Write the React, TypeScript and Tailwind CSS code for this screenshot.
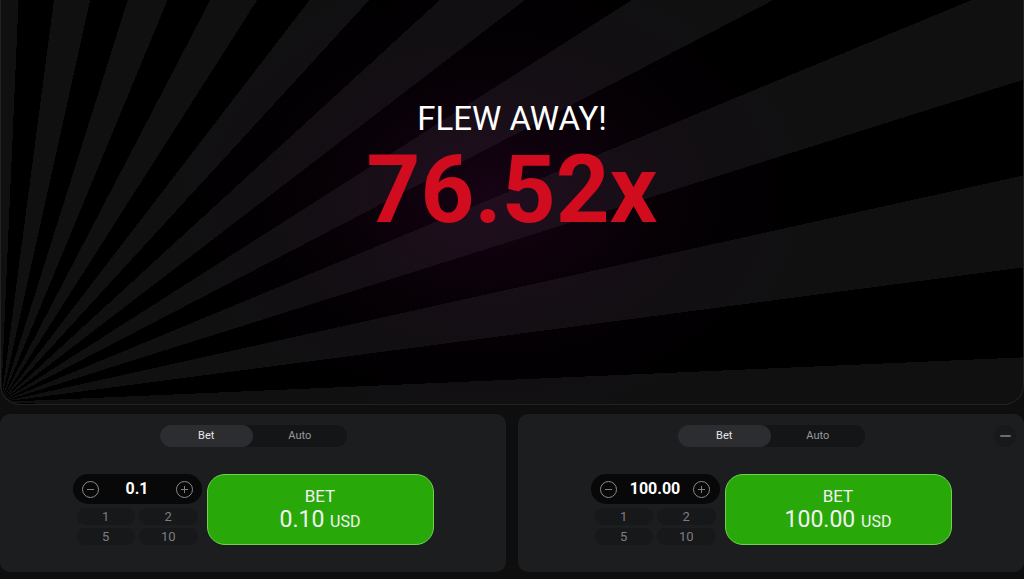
import { Minus, Plus } from "lucide-react";

function CircleIcon({ kind }: { kind: "minus" | "plus" }) {
  return (
    <span className="flex h-[17px] w-[17px] items-center justify-center rounded-full border border-[#8a8a8c] text-[#8a8a8c]">
      {kind === "minus" ? <Minus size={11} strokeWidth={2} /> : <Plus size={11} strokeWidth={2} />}
    </span>
  );
}

function BetPanel({ amount, total, showRemove }: { amount: string; total: string; showRemove?: boolean }) {
  return (
    <div className="relative flex h-[158px] flex-1 flex-col items-center rounded-[10px] bg-[#1c1d1f] pt-[11px]">
      {/* Bet / Auto toggle */}
      <div className="flex h-[22px] w-[187px] rounded-full bg-[#141517] text-[11px]">
        <div className="flex flex-1 items-center justify-center rounded-full bg-[#2c2d30] text-[#e6e6e6]">Bet</div>
        <div className="flex flex-1 items-center justify-center text-[#9a9a9c]">Auto</div>
      </div>

      {showRemove && (
        <div className="absolute right-[8px] top-[11px] flex h-[22px] w-[22px] items-center justify-center rounded-full bg-[#18191b]">
          <span className="h-[2px] w-[11px] rounded bg-[#6d6d70]" />
        </div>
      )}

      <div className="mt-[27px] flex gap-[5px]">
        {/* amount stepper + quick amounts */}
        <div className="flex w-[129px] flex-col">
          <div className="flex h-[30px] items-center justify-between rounded-full bg-[#080808] px-[9px]">
            <CircleIcon kind="minus" />
            <span className="text-[16px] font-bold text-white">{amount}</span>
            <CircleIcon kind="plus" />
          </div>
          <div className="mt-[4px] grid grid-cols-2 gap-x-[4px] gap-y-[3px] px-[4px] text-[13px] text-[#7d7d80]">
            {["1", "2", "5", "10"].map((v) => (
              <div key={v} className="flex h-[17px] items-center justify-center rounded-full bg-[#17181a]">
                {v}
              </div>
            ))}
          </div>
        </div>

        {/* big bet button */}
        <button className="flex h-[71px] w-[227px] flex-col items-center justify-center rounded-[18px] border border-[#6fd24f] bg-[#28a909] leading-none text-[#f2f2f2]">
          <span className="text-[17px]">BET</span>
          <span className="mt-[3px] text-[23px]">
            {total} <span className="text-[16px]">USD</span>
          </span>
        </button>
      </div>
    </div>
  );
}

export default function App() {
  return (
    <div className="h-[579px] w-[1024px] overflow-hidden bg-[#0e0e0f] font-['Roboto',sans-serif]">
      {/* Game area */}
      <div className="relative h-[405px] overflow-hidden rounded-b-[20px] border-x border-b border-[#222224] bg-[repeating-conic-gradient(from_0deg_at_0px_402px,#101011_0deg_2.5deg,#000000_2.5deg_7.5deg,#101011_7.5deg_10deg)]">
        <div className="absolute inset-0 bg-[radial-gradient(ellipse_340px_240px_at_490px_195px,rgba(70,8,60,0.32),rgba(40,4,35,0.12)_55%,transparent_100%)]" />
        <div className="relative flex flex-col items-center pt-[102px]">
          <div className="text-[33px] leading-none text-white">FLEW AWAY!</div>
          <div className="mt-[8px] text-[94px] font-bold leading-none text-[#d10c1f]">76.52x</div>
        </div>
      </div>

      {/* Bet panels */}
      <div className="mt-[9px] flex gap-[12px]">
        <BetPanel amount="0.1" total="0.10" />
        <BetPanel amount="100.00" total="100.00" showRemove />
      </div>
    </div>
  );
}
